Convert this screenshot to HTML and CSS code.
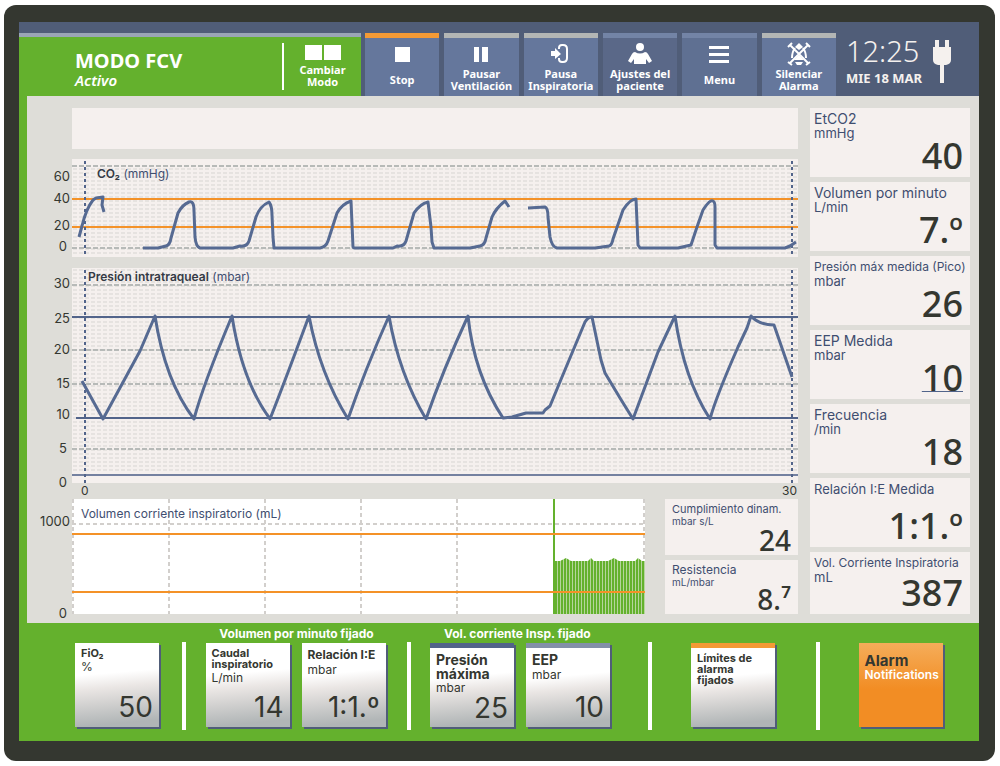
FILE: index.html
```html
<!DOCTYPE html>
<html lang="es">
<head>
<meta charset="utf-8">
<meta name="viewport" content="width=device-width, initial-scale=1">
<title>Modo FCV</title>
<link rel="stylesheet" href="styles.css">
</head>
<body>
<div class="device">
<div class="screen">
  <header class="topbar">
    <div class="mode">
      <div class="mode-name">
        <h1>MODO FCV</h1>
        <p>Activo</p>
      </div>
      <button class="mode-switch" type="button">
        <svg width="36" height="15" viewBox="0 0 36 15" fill="#fff"><path d="M0 0h17v15H0zM19 0h17v15H19z"/></svg>
        <span>Cambiar<br>Modo</span>
      </button>
    </div>
    <nav class="actions">
      <button class="action action-orange" type="button">
        <svg width="24" height="24" viewBox="0 0 24 24" fill="#fff"><path d="M5 5h15v15H5z"/></svg>
        <span>Stop</span>
      </button>
      <button class="action action-grey" type="button">
        <svg width="24" height="24" viewBox="0 0 24 24" fill="#fff"><path d="M5 5h5v15H5zM13 5h6v15h-6z"/></svg>
        <span>Pausar<br>Ventilación</span>
      </button>
      <button class="action action-grey" type="button">
        <svg width="24" height="24" viewBox="0 0 24 24"><path d="M10 7V6q0-3 3-3h1q4 0 4 4v9q0 4-4 4h-1q-3 0-3-3v-1" fill="none" stroke="#fff" stroke-width="2"/><path d="M2 9h4V6l6 6-6 5v-3H2z" fill="#fff"/></svg>
        <span>Pausa<br>Inspiratoria</span>
      </button>
      <button class="action action-dim" type="button">
        <svg width="24" height="24" viewBox="0 0 24 24" fill="#fff"><circle cx="12" cy="5" r="4"/><path d="M7 10q5 3 10 0 2 0 3 2l4 7-3 2-3-4v5H6v-5l-3 4-3-2 4-7q1-2 3-2z"/></svg>
        <span>Ajustes del<br>paciente</span>
      </button>
      <button class="action action-mid" type="button">
        <svg width="24" height="24" viewBox="0 0 24 24" fill="#fff"><path d="M2 4h20v3H2zM2 11h20v3H2zM2 18h20v3H2z"/></svg>
        <span>Menu</span>
      </button>
      <button class="action action-grey" type="button">
        <svg width="24" height="24" viewBox="0 0 24 24" fill="#fff"><path d="M12 1l4 4-4 3-4-3z"/><path d="M12 13l5 5H7z"/><path d="M8 20h8l-2 3h-4z"/><path d="M8 6q-3 4-3 10M16 6q3 4 3 10M3 3l18 18M21 3L3 21M1 5l4-4M19 1l4 4M1 20l4 3M19 23l4-3" fill="none" stroke="#fff" stroke-width="2"/></svg>
        <span>Silenciar<br>Alarma</span>
      </button>
    </nav>
    <div class="status">
      <div class="clock">
        <time class="hour">12:25</time>
        <span class="date">MIE 18 MAR</span>
      </div>
      <svg class="plug" width="18" height="43" viewBox="0 0 18 43" fill="#f5f1ee"><path d="M2 0h4v7h6V0h4v7h2v13q0 4-5 5h-2v18H7V25H5q-5-1-5-5V7h2z"/></svg>
    </div>
  </header>

  <main class="monitor">
    <section class="charts">
      <div class="banner"></div>

      <div class="plot">
        <svg class="axis" width="45" height="98" viewBox="0 0 45 98">
          <text x="43" y="22">60</text><text x="43" y="44">40</text><text x="43" y="71">20</text><text x="40" y="92">0</text>
        </svg>
        <figure class="chart chart-co2">
          <svg viewBox="0 0 726 98" preserveAspectRatio="none">
            <defs>
              <pattern id="dots" width="6" height="4" patternUnits="userSpaceOnUse"><path d="M1 2h4" stroke="#d7d5d2"/></pattern>
            </defs>
            <rect y="9" width="726" height="87" fill="url(#dots)"/>
            <path class="major" d="M0 7h726M0 89h726"/>
            <path class="limit" d="M0 40h726M0 68h726"/>
            <path class="cursor" d="M13 2v94M720 2v94"/>
            <path class="trace" d="M7 78L10 67Q14 50 21 41L24 39 31 38 30 46 32 53"/>
            <path class="trace" d="M71 89H86L94 87Q98 86 99 79L106 54Q110 46 117 43 122 41 122 52L123 78Q124 88 128 89H161L168 87Q175 88 177 82L184 58Q188 47 197 43 200 47 200 56L201 78 202 89H248Q254 88 256 82L265 54Q270 45 279 42L281 88 282 89H321L325 87Q332 88 334 82L342 54Q348 45 356 43L359 68 360 83 362 89H398L408 87Q413 86 414 79L420 58Q424 49 433 42L437 48"/>
            <path class="trace" d="M456 49L473 48Q476 49 476 58L478 78Q480 88 485 89H523L537 87Q540 86 541 80L551 51Q558 40 564 40L566 86 568 89H606L619 86 625 68 631 51Q638 40 641 42 643 43 643 48V86L645 89H713L718 87 724 83"/>
          </svg>
          <figcaption><b>CO₂</b> (mmHg)</figcaption>
        </figure>
      </div>

      <div class="plot">
        <svg class="axis" width="45" height="231" viewBox="0 0 45 231">
          <text x="43" y="20">30</text><text x="43" y="55">25</text><text x="43" y="86">20</text><text x="43" y="120">15</text><text x="43" y="151">10</text><text x="40" y="185">5</text><text x="40" y="219">0</text>
        </svg>
        <div>
          <figure class="chart chart-pressure">
            <svg viewBox="0 0 726 215" preserveAspectRatio="none">
              <rect width="726" height="203" fill="url(#dots)"/>
              <path class="major" d="M0 17h726M0 82h726M0 116h726M0 181h726"/>
              <path class="level" d="M0 49h726M4 150h722"/>
              <path class="base" d="M0 207h726"/>
              <path class="cursor" d="M13 2v213M720 2v213"/>
              <path class="trace" d="M10 113L31 151 68 83 83 48Q93 113 122 151 131 117 160 48 170 113 198 151 213 113 237 48 248 106 276 151 293 102 317 48 327 106 354 151 371 102 396 48 402 106 431 150L440 149 454 145 471 145 473 142 478 138 490 109 513 54Q516 49 520 49L529 92 533 105 548 130 561 151 586 84 603 48Q612 111 638 151 644 129 666 79L675 60 679 48Q687 57 702 57L720 109"/>
            </svg>
            <figcaption><b>Presión intratraqueal</b> (mbar)</figcaption>
          </figure>
          <div class="time-axis"><span>0</span><span>30</span></div>
        </div>
      </div>

      <div class="lower">
        <div class="plot">
          <svg class="axis" width="45" height="118" viewBox="0 0 45 118">
            <text x="43" y="27">1000</text><text x="40" y="119">0</text>
          </svg>
          <figure class="chart chart-volume">
            <svg viewBox="0 0 573 115" preserveAspectRatio="none">
              <defs>
                <pattern id="bars" width="3" height="4" patternUnits="userSpaceOnUse"><path d="M0 0h2v4H0z" fill="#64b12d"/><path d="M2 0h1v4H2z" fill="#b5d59c"/></pattern>
              </defs>
              <path class="grid" d="M1 0v115M97 0v115M193 0v115M289 0v115M385 0v115M572 0v115M0 25h573"/>
              <path fill="url(#bars)" d="M483 115V62h5l6-3 5 3h17l3-3 3 3h14l6-3 5 3h16l3-3 4 3h3v53z"/>
              <path d="M482 0v115" stroke="#64b12d" stroke-width="2"/>
              <path class="limit" d="M0 35h573M0 93h573"/>
            </svg>
            <figcaption>Volumen corriente inspiratorio (mL)</figcaption>
          </figure>
        </div>
        <div class="minor-list">
          <article class="metric minor"><div class="label"><h2 class="t11">Cumplimiento dinam.</h2><p class="t10">mbar s/L</p></div><strong>24</strong></article>
          <article class="metric minor"><div class="label"><h2 class="t12">Resistencia</h2><p class="t10">mL/mbar</p></div><strong>8.⁷</strong></article>
        </div>
      </div>
    </section>

    <aside class="metrics">
      <article class="metric"><div class="label"><h2>EtCO2</h2><p>mmHg</p></div><strong>40</strong></article>
      <article class="metric"><div class="label"><h2>Volumen por minuto</h2><p>L/min</p></div><strong>7.º</strong></article>
      <article class="metric"><div class="label"><h2 class="t12">Presión máx medida (Pico)</h2><p>mbar</p></div><strong>26</strong></article>
      <article class="metric"><div class="label"><h2>EEP Medida</h2><p>mbar</p></div><strong class="underlined">10</strong></article>
      <article class="metric"><div class="label"><h2>Frecuencia</h2><p>/min</p></div><strong>18</strong></article>
      <article class="metric"><div class="label"><h2 class="t13">Relación I:E Medida</h2></div><strong>1:1.º</strong></article>
      <article class="metric"><div class="label"><h2 class="t12">Vol. Corriente Inspiratoria</h2><p>mL</p></div><strong>387</strong></article>
    </aside>
  </main>

  <footer class="settings">
    <section class="group group-first">
      <div class="keys">
        <button class="key" type="button"><b class="t11">FiO₂</b><span>%</span><strong>50</strong></button>
      </div>
    </section>
    <section class="group">
      <h3>Volumen por minuto fijado</h3>
      <div class="keys">
        <button class="key" type="button"><b class="t11">Caudal inspiratorio</b><span>L/min</span><strong>14</strong></button>
        <button class="key" type="button"><b class="t12">Relación I:E</b><span>mbar</span><strong>1:1.º</strong></button>
      </div>
    </section>
    <section class="group group-start">
      <h3>Vol. corriente Insp. fijado</h3>
      <div class="keys">
        <button class="key key-blue" type="button"><b>Presión máxima</b><span>mbar</span><strong>25</strong></button>
        <button class="key key-slate" type="button"><b>EEP</b><span>mbar</span><strong>10</strong></button>
      </div>
    </section>
    <section class="group">
      <div class="keys">
        <button class="key key-orange" type="button"><b class="t11">Límites de alarma fijados</b></button>
      </div>
    </section>
    <section class="group group-last">
      <div class="keys">
        <button class="key key-alarm" type="button"><b>Alarm</b><span>Notifications</span></button>
      </div>
    </section>
  </footer>
</div>
</div>
</body>
</html>
```

FILE: styles.css
```css
* { box-sizing: border-box; margin: 0; padding: 0; }

body {
  background: #fff;
  color: #343730;
  font-family: Inter, "Liberation Sans", sans-serif;
  padding: 5px 5px 4px 4px;
}

button { font: inherit; color: inherit; border: 0; cursor: pointer; }
svg { display: block; }

.device {
  background: #343730;
  border-radius: 12px;
  padding: 17px 16px 20px 15px;
}
.screen { background: #64b12d; }

/* Top bar */
.topbar {
  display: grid;
  grid-template-columns: 342fr 471fr 139fr;
  gap: 4px;
  height: 74px;
  padding-top: 11px;
  background: #505d78;
  color: #fff;
  font-family: "Noto Sans", "Open Sans", sans-serif;
}
.mode {
  display: flex;
  justify-content: space-between;
  align-items: center;
  background: #64b12d;
  border-top: 4px solid #9aa5b5;
}
.mode-name { padding: 4px 0 0 56px; }
.mode-name h1 { font-size: 20px; line-height: 22px; font-weight: 700; }
.mode-name p { font-size: 15px; line-height: 16px; font-style: italic; font-weight: 600; }
.mode-switch {
  display: flex;
  flex-direction: column;
  align-items: center;
  justify-content: center;
  gap: 4px;
  width: 79px;
  height: 47px;
  background: none;
  border-left: 2px solid #fff;
  font-size: 11px;
  line-height: 12px;
  font-weight: 700;
}
.actions { display: grid; grid-template-columns: repeat(6, 1fr); gap: 5px; }
.action {
  display: flex;
  flex-direction: column;
  align-items: center;
  background: #65779c;
  border-top: 5px solid #b3b6b5;
  padding-top: 4px;
  font-size: 11px;
  line-height: 12px;
  font-weight: 700;
}
.action span { flex: 1; display: flex; flex-direction: column; justify-content: center; padding-bottom: 2px; white-space: nowrap; }
.action-orange { border-color: #f49a35; }
.action-dim { background: #5a6888; border-color: #7384a6; }
.action-mid { background: #5f7092; border-color: #7384a6; }
.status { display: flex; align-items: center; gap: 11px; padding: 0 0 6px 6px; color: #f5f1ee; }
.clock { display: flex; flex-direction: column; white-space: nowrap; }
.hour { font-size: 29px; line-height: 32px; font-weight: 300; }
.date { font-size: 13px; line-height: 22px; font-weight: 700; }
.plug { flex: none; }

/* Monitor area */
.monitor {
  display: grid;
  grid-template-columns: minmax(0, 771fr) minmax(0, 160fr);
  gap: 12px;
  margin-left: 8px;
  padding: 12px 9px 9px 0;
  background: #deddd8;
}
.banner { height: 41px; margin: 0 0 10px 45px; background: #f5f0ee; }
.plot { display: grid; grid-template-columns: 45px minmax(0, 1fr); }
.axis { font-size: 13px; overflow: visible; }
.axis text { text-anchor: end; fill: #343730; }
.chart { position: relative; background: #f5f0ee; }
.chart > svg { width: 100%; height: 100%; }
.chart figcaption { position: absolute; font-size: 12px; line-height: 16px; color: #3f4e70; }
.chart figcaption b { color: #343a45; font-weight: 600; }
.chart-co2 { height: 98px; margin-bottom: 11px; }
.chart-co2 figcaption { left: 25px; top: 7px; }
.chart-pressure { height: 215px; }
.chart-pressure figcaption { left: 16px; top: 1px; }
.chart-volume { height: 115px; background: #fff; }
.chart-volume figcaption { left: 9px; top: 7px; }
.time-axis { display: flex; justify-content: space-between; height: 16px; padding: 0 1px 0 9px; font-size: 12px; line-height: 16px; }

.major { stroke: #b7bab8; stroke-width: 2; stroke-dasharray: 5 2; }
.grid { stroke: #d2cfcc; stroke-width: 2; stroke-dasharray: 4 3; fill: none; }
.limit { stroke: #f49228; stroke-width: 2; }
.level { stroke: #52648a; stroke-width: 2; }
.base { stroke: #7481a0; stroke-width: 2; }
.cursor { stroke: #52648a; stroke-width: 2; stroke-dasharray: 3 3; }
.trace { stroke: #566a92; stroke-width: 3; fill: none; stroke-linejoin: round; }

.lower { display: grid; grid-template-columns: minmax(0, 618fr) minmax(0, 133fr); gap: 20px; height: 115px; }
.minor-list { display: grid; grid-template-rows: 56px 54px; gap: 5px; }

/* Readouts */
.metrics { display: grid; grid-template-columns: minmax(0, 1fr); grid-template-rows: repeat(6, 69px) 62px; gap: 5px; }
.metric { display: grid; grid-template-columns: minmax(0, 1fr); background: #f5f0ee; padding: 4px 7px 3px 4px; color: #3f4e70; white-space: nowrap; }
.metric > * { grid-area: 1 / 1; }
.metric h2 { font-size: 14px; line-height: 14px; font-weight: 400; }
.metric h2.t13 { font-size: 13px; }
.metric h2.t12 { font-size: 12px; }
.metric h2.t11 { font-size: 11px; }
.metric p { font-size: 13px; line-height: 14px; }
.metric p.t10 { font-size: 10px; line-height: 11px; }
.metric strong {
  align-self: end;
  justify-self: end;
  color: #343730;
  font-family: "Noto Sans", "Open Sans", sans-serif;
  font-size: 36px;
  line-height: 36px;
  font-weight: 500;
}
.metric .underlined { text-decoration: underline; text-decoration-thickness: 1px; text-decoration-color: #52648a; text-underline-offset: 0; }
.minor { padding: 3px 7px 1px 7px; }
.minor strong { font-size: 28px; line-height: 28px; }

/* Settings bar */
.settings { display: grid; grid-template-columns: 165fr 225fr 241fr 168fr 161fr; height: 118px; padding-bottom: 11px; }
.group { position: relative; display: flex; flex-direction: column; align-items: center; }
.group h3 { height: 20px; color: #fff; font-size: 12px; line-height: 22px; font-weight: 700; white-space: nowrap; }
.group + .group::before { content: ""; position: absolute; left: -2px; top: 19px; bottom: 0; width: 4px; background: #fff; }
.group-first { align-items: flex-start; padding-left: 56px; }
.group-start { align-items: flex-start; padding-left: 21px; }
.group-start h3 { padding-left: 14px; }
.group-last { padding-left: 6px; }
.keys { display: flex; gap: 12px; margin-top: auto; padding: 0 2px 3px 0; }
.key {
  display: flex;
  flex-direction: column;
  width: 84px;
  height: 84px;
  padding: 5px 6px 6px;
  background: linear-gradient(175deg, #fff 36%, #eae6e4 52%, #d3d2d1 68%, #b0b5b6 92%);
  box-shadow: 2px 2px 0 #505d78;
  text-align: left;
}
.key b { font-size: 14px; line-height: 14px; font-weight: 700; }
.key b.t11 { font-size: 11px; line-height: 11px; }
.key b.t12 { font-size: 12px; line-height: 14px; }
.key span { font-size: 12px; line-height: 16px; }
.key strong { margin-top: auto; align-self: flex-end; font-size: 28px; line-height: 28px; font-weight: 400; }
.key-blue { border-top: 5px solid #52648a; }
.key-blue span { line-height: 14px; }
.key-blue strong { line-height: 26px; }
.key-slate { border-top: 5px solid #8390a8; }
.key-orange { border-top: 5px solid #f49a35; }
.key-alarm { padding-top: 11px; background: linear-gradient(#f5ad5a, #f28d24 55%); }
.key-alarm b { font-size: 15px; }
.key-alarm span { color: #fff; font-size: 12px; line-height: 14px; font-weight: 600; }
```
